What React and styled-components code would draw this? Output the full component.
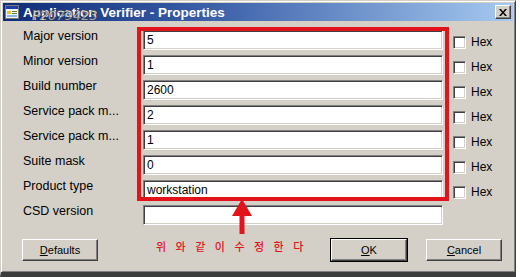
import styled, { createGlobalStyle } from "styled-components";

const GlobalStyle = createGlobalStyle`
  html, body { margin: 0; padding: 0; background: #ffffff; overflow: hidden; }
  body { font-family: "Liberation Sans", Arial, sans-serif; }
`;

const fields = [
  { label: "Major version", value: "5", hex: true },
  { label: "Minor version", value: "1", hex: true },
  { label: "Build number", value: "2600", hex: true },
  { label: "Service pack m...", value: "2", hex: true },
  { label: "Service pack m...", value: "1", hex: true },
  { label: "Suite mask", value: "0", hex: true },
  { label: "Product type", value: "workstation", hex: true },
  { label: "CSD version", value: "", hex: false },
];

const AppIcon = () => (
  <svg width="14" height="14" viewBox="0 0 14 14">
    <rect x="0.5" y="0.5" width="13" height="13" fill="#f4f4f4" stroke="#7a7a7a" />
    <rect x="1" y="1" width="12" height="3" fill="#1c3fa8" />
    <rect x="2" y="6" width="4" height="3" fill="#e6c13a" />
    <rect x="7" y="6" width="5" height="1" fill="#5a8a3a" />
    <rect x="7" y="8" width="5" height="1" fill="#5a8a3a" />
    <rect x="2" y="10" width="10" height="2" fill="#8fb6e8" />
  </svg>
);

const App = () => {
  return (
    <>
      <GlobalStyle />
      <Window>
        <TitleBar>
          <AppIcon />
          <Title>Application Verifier - Properties</Title>
          <CloseButton>
            <svg width="8" height="7" viewBox="0 0 8 7">
              <path d="M0 0h2l2 2.5L6 0h2L5 3.5 8 7H6L4 4.5 2 7H0l3-3.5z" fill="#000" />
            </svg>
          </CloseButton>
          <Watermark>P2079423</Watermark>
        </TitleBar>
        <Body>
          <Form>
            {fields.map((f, i) => (
              <Row key={i}>
                <Label>{f.label}</Label>
                <Field>{f.value}</Field>
                {f.hex && (
                  <HexBox>
                    <Check />
                    <HexText>Hex</HexText>
                  </HexBox>
                )}
              </Row>
            ))}
          </Form>
          <ButtonRow>
            <Button><u>D</u>efaults</Button>
            <Spacer />
            <Button $default><u>O</u>K</Button>
            <Button><u>C</u>ancel</Button>
          </ButtonRow>
          <Highlight />
          <Arrow>
            <svg width="22" height="35" viewBox="0 0 22 35">
              <polygon points="11,0 21,17 1,17" fill="#e3131b" />
              <rect x="8.5" y="16" width="5" height="19" fill="#e3131b" />
            </svg>
          </Arrow>
          <Note>위 와 같 이 수 정 한 다</Note>
        </Body>
      </Window>
    </>
  );
};

const Window = styled.div`
  position: relative;
  width: 516px;
  height: 277px;
  background: #d4d0c8;
  box-sizing: border-box;
  border-top: 1px solid #d4d0c8;
  border-left: 1px solid #d4d0c8;
  border-right: 1px solid #404040;
  border-bottom: 5px solid #3c3c3c;
  box-shadow: inset 1px 1px 0 #ffffff, inset -1px -1px 0 #808080;
  padding: 2px 2px 0 2px;
  display: flex;
  flex-direction: column;
`;

const TitleBar = styled.div`
  position: relative;
  height: 18px;
  display: flex;
  align-items: center;
  padding-left: 2px;
  background: linear-gradient(90deg, #0f2c78 0%, #3a5ea8 40%, #a6caf0 100%);
`;

const Title = styled.div`
  margin-left: 4px;
  color: #ffffff;
  font-family: "Liberation Sans", Arial, sans-serif;
  font-weight: 700;
  font-size: 13.5px;
  white-space: nowrap;
  flex: 1;
`;

const Watermark = styled.span`
  position: absolute;
  left: 29px;
  top: 5px;
  font-family: "DejaVu Sans", sans-serif;
  font-style: italic;
  font-size: 13px;
  color: rgba(235, 235, 235, 0.85);
  text-shadow: 1px 0 0 #3a3a3a, -1px 0 0 #3a3a3a, 0 1px 0 #3a3a3a, 0 -1px 0 #3a3a3a;
  opacity: 0.7;
  pointer-events: none;
`;

const CloseButton = styled.div`
  width: 16px;
  height: 14px;
  margin-right: 2px;
  box-sizing: border-box;
  background: #d4d0c8;
  border-top: 1px solid #ffffff;
  border-left: 1px solid #ffffff;
  border-right: 1px solid #404040;
  border-bottom: 1px solid #404040;
  box-shadow: inset -1px -1px 0 #808080;
  display: flex;
  align-items: center;
  justify-content: center;
`;

const Body = styled.div`
  position: relative;
  flex: 1;
`;

const Form = styled.div`
  display: flex;
  flex-direction: column;
  padding: 9px 0 0 20px;
`;

const Row = styled.div`
  height: 25px;
  display: flex;
  align-items: flex-start;
`;

const Label = styled.div`
  width: 120px;
  font-size: 12.5px;
  line-height: 12px;
  color: #000;
  white-space: nowrap;
`;

const Field = styled.div`
  width: 300px;
  height: 20px;
  box-sizing: border-box;
  background: #ffffff;
  border-top: 1px solid #808080;
  border-left: 1px solid #808080;
  border-right: 1px solid #ffffff;
  border-bottom: 1px solid #ffffff;
  box-shadow: inset 1px 1px 0 #404040, inset -1px -1px 0 #d4d0c8;
  padding: 0 3px;
  font-size: 12px;
  line-height: 18px;
  color: #000;
`;

const HexBox = styled.div`
  display: flex;
  align-items: center;
  margin: 5px 0 0 10px;
  gap: 5px;
`;

const Check = styled.div`
  width: 13px;
  height: 13px;
  box-sizing: border-box;
  background: #ffffff;
  border-top: 1px solid #808080;
  border-left: 1px solid #808080;
  border-right: 1px solid #ffffff;
  border-bottom: 1px solid #ffffff;
  box-shadow: inset 1px 1px 0 #404040, inset -1px -1px 0 #d4d0c8;
`;

const HexText = styled.span`
  font-size: 12px;
  color: #000;
`;

const ButtonRow = styled.div`
  display: flex;
  align-items: center;
  gap: 19px;
  padding: 9px 11px 0 19px;
`;

const Spacer = styled.div`
  flex: 1;
`;

const Button = styled.div`
  width: 76px;
  height: 22px;
  box-sizing: border-box;
  background: #d4d0c8;
  border-top: 1px solid #ffffff;
  border-left: 1px solid #ffffff;
  border-right: 1px solid #404040;
  border-bottom: 1px solid #404040;
  box-shadow: ${(p) =>
    p.$default
      ? "inset -1px -1px 0 #808080, 0 0 0 1px #000"
      : "inset -1px -1px 0 #808080"};
  display: flex;
  align-items: center;
  justify-content: center;
  font-size: 11px;
  color: #000;
  u { text-decoration-thickness: 1px; text-underline-offset: 1px; }
`;

const Highlight = styled.div`
  position: absolute;
  left: 134px;
  top: 6px;
  width: 312px;
  height: 174px;
  box-sizing: border-box;
  border: 4px solid #e3131b;
  pointer-events: none;
`;

const Arrow = styled.div`
  position: absolute;
  left: 228px;
  top: 178px;
  line-height: 0;
`;

const Note = styled.div`
  position: absolute;
  left: 153px;
  top: 217px;
  font-family: "Noto Sans CJK KR", sans-serif;
  font-weight: 500;
  font-size: 11px;
  letter-spacing: 3px;
  word-spacing: 1px;
  color: #e3131b;
  white-space: nowrap;
`;

export default App;
